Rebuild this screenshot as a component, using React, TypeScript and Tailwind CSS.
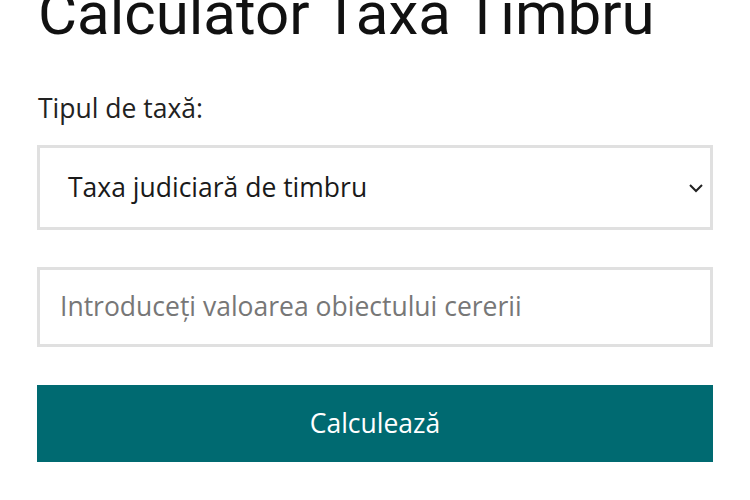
import React from "react";

export default function App() {
  return (
    <div className="w-[750px] h-[500px] overflow-hidden bg-white">
      <div className="ml-[37px] w-[676px] -mt-[18px]">
        <h1 className="text-[60px] leading-[64px] text-[#111] font-[Roboto,sans-serif] font-normal pl-[1px] whitespace-nowrap">
          Calculator Taxa Timbru
        </h1>
        <div className="mt-[44px] font-['Open_Sans',sans-serif]">
          <label className="block pl-[1px] text-[26.5px] leading-[36px] text-[#222]">Tipul de taxă:</label>
          <div className="mt-[19px] h-[85px] border-[3px] border-[#e0e0e0] flex items-center justify-between pl-[28px] pr-[6px]">
            <span className="text-[26.5px] text-[#1a1a1a]">Taxa judiciară de timbru</span>
            <svg width="16" height="10" viewBox="0 0 16 10">
              <path d="M2 2 L8 8 L14 2" fill="none" stroke="#222" strokeWidth="2" />
            </svg>
          </div>
          <div className="mt-[37px] h-[80px] border-[3px] border-[#e0e0e0] flex items-center pl-[20px]">
            <span className="text-[26.5px] text-[#777]">Introduceți valoarea obiectului cererii</span>
          </div>
          <button className="mt-[38px] w-full h-[77px] bg-[#006a71] text-white text-[26.5px] flex items-center justify-center">
            Calculează
          </button>
        </div>
      </div>
    </div>
  );
}
